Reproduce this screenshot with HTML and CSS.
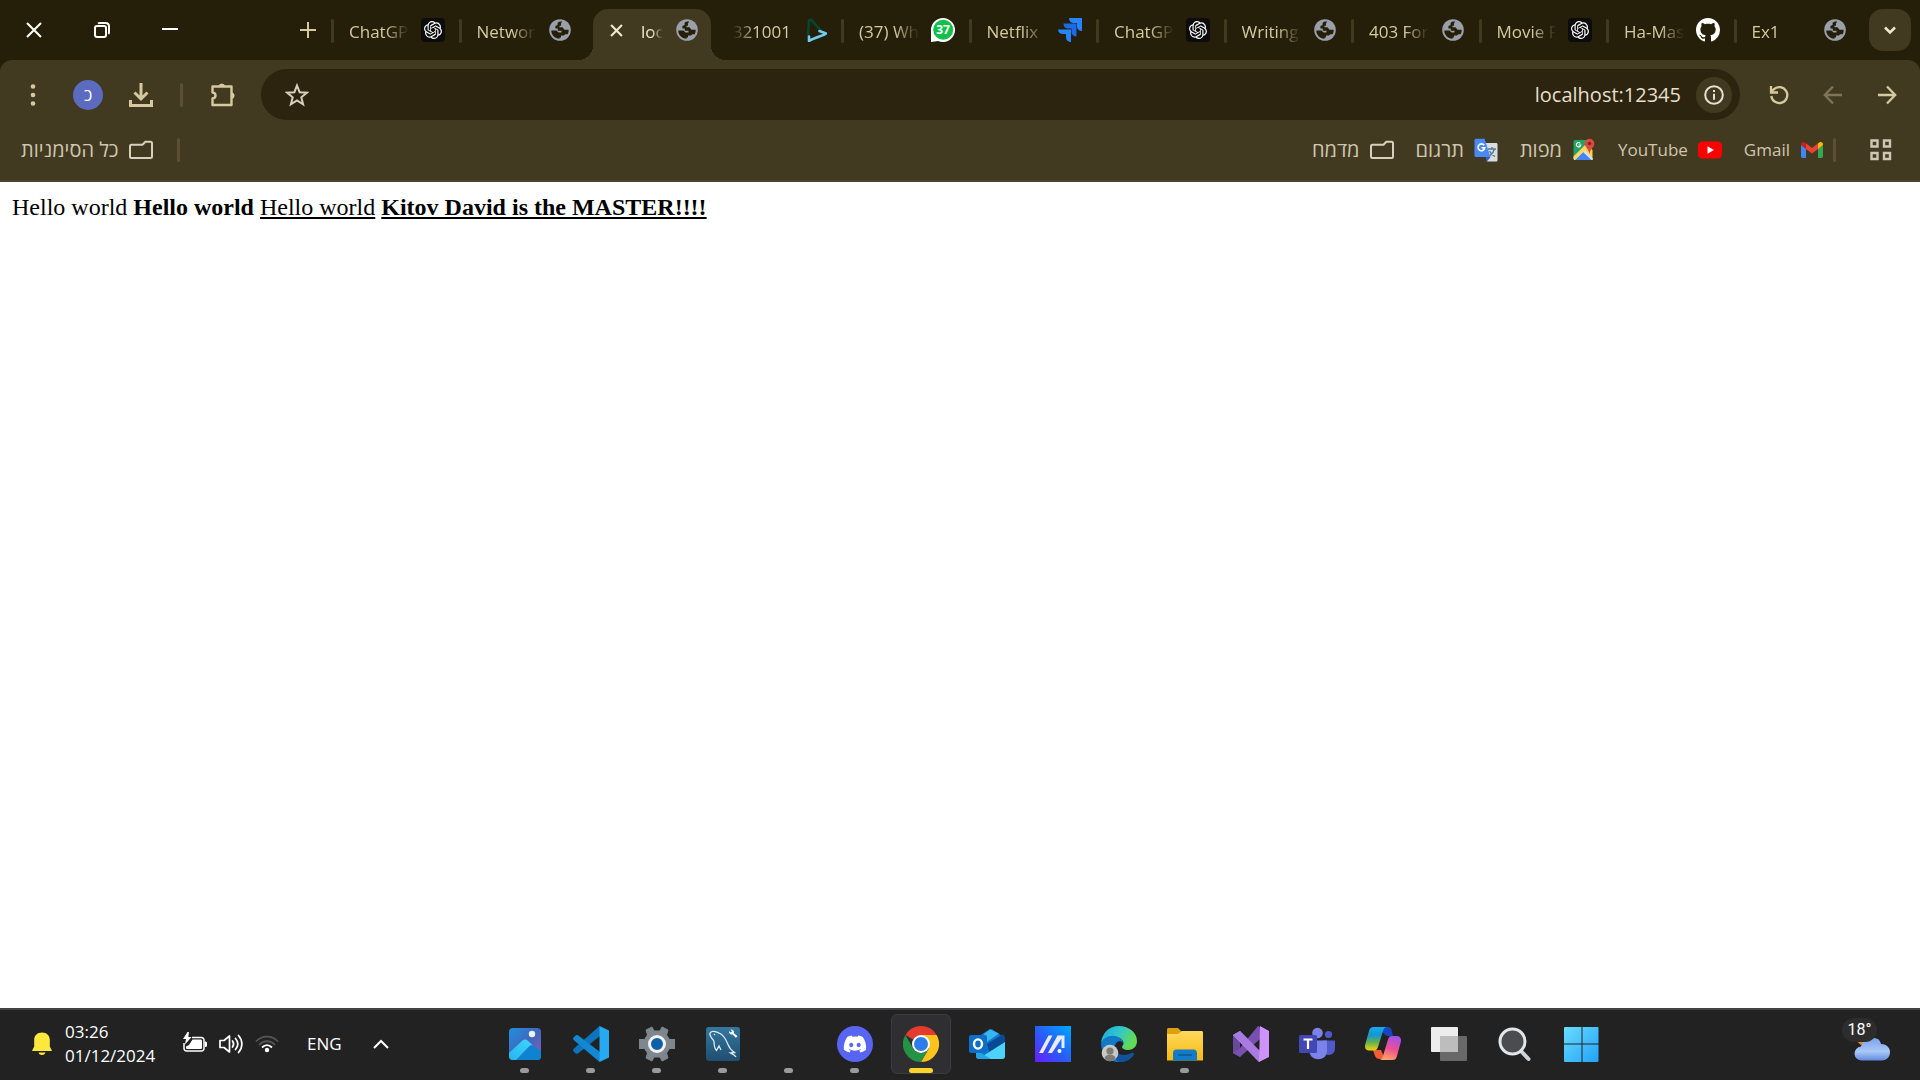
FILE: index.html
```html
<!DOCTYPE html>
<html lang="en">
<head>
<meta charset="utf-8">
<title>localhost:12345</title>
<link rel="stylesheet" href="styles.css">
</head>
<body>
<svg class="defs" aria-hidden="true">
  <defs>
    <symbol id="globe" viewBox="0 0 24 24">
      <circle cx="12" cy="12" r="10.8" fill="#9aa0a9"/>
      <path class="land" d="M3.300 12.600h5.200l2 2h3V12.800H9.800V10.600H7.400V8l2.200-1V4.700c1-.8 2.600-1.300 4.600-1.100L13 5.600v2.200h-1.500v1.400h3l2 2.500h4.100c.2 1.500-.2 3-1 4.500h-2.400l-1.200 1.200h-3v2h-1.500v1.400c-4.600 0-8.200-3.600-8.200-8.200z"/>
    </symbol>
    <symbol id="openai" viewBox="0 0 24 24">
      <rect width="24" height="24" rx="4" fill="#0c0c0c"/>
      <path transform="translate(3 3) scale(.75)" fill="#fff" d="M22.2819 9.8211a5.9847 5.9847 0 0 0-.5157-4.9108 6.0462 6.0462 0 0 0-6.5098-2.9A6.0651 6.0651 0 0 0 4.9807 4.1818a5.9847 5.9847 0 0 0-3.9977 2.9 6.0462 6.0462 0 0 0 .7427 7.0966 5.98 5.98 0 0 0 .511 4.9107 6.051 6.051 0 0 0 6.5146 2.9001A5.9847 5.9847 0 0 0 13.2599 24a6.0557 6.0557 0 0 0 5.7718-4.2058 5.9894 5.9894 0 0 0 3.9977-2.9001 6.0557 6.0557 0 0 0-.7475-7.0729zm-9.022 12.6081a4.4755 4.4755 0 0 1-2.8764-1.0408l.1419-.0804 4.7783-2.7582a.7948.7948 0 0 0 .3927-.6813v-6.7369l2.02 1.1686a.071.071 0 0 1 .038.052v5.5826a4.504 4.504 0 0 1-4.4945 4.4944zm-9.6607-4.1254a4.4708 4.4708 0 0 1-.5346-3.0137l.142.0852 4.783 2.7582a.7712.7712 0 0 0 .7806 0l5.8428-3.3685v2.3324a.0804.0804 0 0 1-.0332.0615L9.74 19.9502a4.4992 4.4992 0 0 1-6.1408-1.6464zM2.3408 7.8956a4.485 4.485 0 0 1 2.3655-1.9728V11.6a.7664.7664 0 0 0 .3879.6765l5.8144 3.3543-2.0201 1.1685a.0757.0757 0 0 1-.071 0l-4.8303-2.7865A4.504 4.504 0 0 1 2.3408 7.872zm16.5963 3.8558L13.1038 8.364 15.1192 7.2a.0757.0757 0 0 1 .071 0l4.8303 2.7913a4.4944 4.4944 0 0 1-.6765 8.1042v-5.6772a.79.79 0 0 0-.407-.667zm2.0107-3.0231l-.142-.0852-4.7735-2.7818a.7759.7759 0 0 0-.7854 0L9.409 9.2297V6.8974a.0662.0662 0 0 1 .0284-.0615l4.8303-2.7866a4.4992 4.4992 0 0 1 6.6802 4.66zM8.3065 12.863l-2.02-1.1638a.0804.0804 0 0 1-.038-.0567V6.0742a4.4992 4.4992 0 0 1 7.3757-3.4537l-.142.0805L8.704 5.459a.7948.7948 0 0 0-.3927.6813zm1.0976-2.3654l2.602-1.4998 2.6069 1.4998v2.9994l-2.5974 1.4997-2.6067-1.4997Z"/>
    </symbol>
    <symbol id="folder" viewBox="0 0 24 24">
      <path d="M2.500 4.800h11l2.800-3h5.200c.8 0 1.500.7 1.500 1.500v13.200c0 .8-.7 1.500-1.500 1.500h-19c-.8 0-1.500-.7-1.500-1.500V6.300c0-.8.7-1.500 1.500-1.500z" transform="translate(0 2)" fill="none" stroke="#d8d0bd" stroke-width="2"/>
    </symbol>
  </defs>
</svg>

<header class="browser">
  <div class="tabstrip">
    <div class="window-controls">
      <button class="win" aria-label="Close"><svg width="16" height="16" viewBox="0 0 16 16"><path d="M1 1l14 14M15 1L1 15" stroke="#fff" stroke-width="2"/></svg></button>
      <button class="win" aria-label="Restore"><svg width="16" height="16" viewBox="0 0 16 16" fill="none" stroke="#fff" stroke-width="2"><rect x="1" y="4" width="11" height="11" rx="2"/><path d="M4 1.500c.5-.4 1-.5 2-.5h5.500C13.500 1 15 2.500 15 4.500V10c0 1-.2 1.600-.6 2"/></svg></button>
      <button class="win" aria-label="Minimize"><svg width="16" height="16" viewBox="0 0 16 16"><path d="M0 7h16" stroke="#fff" stroke-width="2"/></svg></button>
    </div>
    <button class="new-tab" aria-label="New tab"><svg width="16" height="16" viewBox="0 0 16 16"><path d="M8 0v16M0 8h16" stroke="#d6c9a0" stroke-width="2"/></svg></button>
    <nav class="tabs">
      <a class="tab" href="#"><span class="title">ChatGPT</span><svg class="fav"><use href="#openai"/></svg></a>
      <a class="tab" href="#"><span class="title">Network</span><svg class="fav"><use href="#globe"/></svg></a>
      <a class="tab active" href="#" aria-current="page"><svg class="close" viewBox="0 0 12 12"><path d="M1 1l10 10M11 1L1 11" stroke="#eee6d2" stroke-width="2"/></svg><span class="title">loca</span><svg class="fav"><use href="#globe"/></svg></a>
      <a class="tab after-active" href="#"><span class="title start-fade">321001</span><svg class="fav" viewBox="0 0 24 24" fill="none" stroke-width="2.600" stroke-linecap="round" stroke-linejoin="round"><path d="M5 17.500L6 3c.2-1.500 1.500-1.800 2.500-.8L17 11.500" stroke="#06452f"/><path d="M16.500 13l6.500 2.500c-3 2.500-11 3.500-17 7.500V18.500" stroke="#6fcdf2"/></svg></a>
      <a class="tab" href="#"><span class="title">(37) Wh</span><svg class="fav" viewBox="0 0 24 24"><path d="M12 0a12 12 0 1 1-5 22.900L0 24V12A12 12 0 0 1 12 0z" fill="#fff"/><circle cx="12.200" cy="11.800" r="10" fill="#12c04b"/><text x="12" y="16" text-anchor="middle" class="badge">37</text></svg></a>
      <a class="tab" href="#"><span class="title">Netflix</span><svg class="fav" viewBox="0 0 24 24"><path d="M11 0h13v13c-3 0-5-2-5-4.500V5h-3c-3 0-5-2-5-5z" fill="#2684ff"/><path d="M5.500 5.500h13v13c-3 0-5-2-5-4.500v-3.500h-3c-3 0-5-2-5-5z" fill="#1b6be8"/><path d="M0 11.500h13V24c-3 0-5-2-5-4.500V16H5c-3 0-5-2-5-4.500z" fill="#2684ff"/></svg></a>
      <a class="tab" href="#"><span class="title">ChatGPT</span><svg class="fav"><use href="#openai"/></svg></a>
      <a class="tab" href="#"><span class="title">Writing</span><svg class="fav"><use href="#globe"/></svg></a>
      <a class="tab" href="#"><span class="title">403 For</span><svg class="fav"><use href="#globe"/></svg></a>
      <a class="tab" href="#"><span class="title">Movie R</span><svg class="fav"><use href="#openai"/></svg></a>
      <a class="tab" href="#"><span class="title">Ha-Mas</span><svg class="fav" viewBox="0 0 16 16"><path fill="#fff" d="M8 0C3.580 0 0 3.580 0 8c0 3.540 2.290 6.530 5.470 7.590.4.070.55-.17.55-.38 0-.19-.01-.82-.01-1.490-2.010.37-2.530-.49-2.690-.94-.09-.23-.48-.94-.82-1.130-.28-.15-.68-.52-.01-.53.63-.01 1.080.58 1.230.82.72 1.210 1.870.87 2.330.66.07-.52.28-.87.51-1.070-1.780-.2-3.640-.89-3.640-3.950 0-.87.31-1.590.82-2.150-.08-.2-.36-1.020.08-2.120 0 0 .67-.21 2.200.82.64-.18 1.320-.27 2-.27s1.360.09 2 .27c1.530-1.040 2.200-.82 2.200-.82.44 1.100.16 1.920.08 2.120.51.56.82 1.270.82 2.150 0 3.070-1.870 3.750-3.650 3.950.29.25.54.73.54 1.480 0 1.070-.01 1.930-.01 2.200 0 .21.15.46.55.38A8.010 8.010 0 0 0 16 8c0-4.420-3.580-8-8-8z"/></svg></a>
      <a class="tab" href="#"><span class="title">Ex1</span><svg class="fav"><use href="#globe"/></svg></a>
    </nav>
    <button class="tab-search" aria-label="Search tabs"><svg width="14" height="14" viewBox="0 0 14 14"><path d="M2 4.500l5 5 5-5" fill="none" stroke="#eee6d2" stroke-width="2.500"/></svg></button>
  </div>

  <div class="toolbar">
    <div class="tools">
      <button class="tool" aria-label="Menu"><svg width="24" height="24" viewBox="0 0 24 24" fill="#d6c9a0"><circle cx="12" cy="3.500" r="2.300"/><circle cx="12" cy="12" r="2.300"/><circle cx="12" cy="20.500" r="2.300"/></svg></button>
      <button class="avatar" lang="he">כ</button>
      <button class="tool" aria-label="Downloads"><svg width="26" height="26" viewBox="0 0 26 26" fill="none" stroke="#d6c9a0" stroke-width="3"><path d="M13 1v15M6.500 10.500L13 17l6.500-6.500M2.500 18v5.500h21V18"/></svg></button>
      <span class="rule"></span>
      <button class="tool" aria-label="Extensions"><svg width="26" height="26" viewBox="0 0 26 26"><path d="M4.500 4.500h17v18.500h-19v-6.500c4-.5 4-5.500 0-6V4.500z" fill="none" stroke="#d6c9a0" stroke-width="2.400" stroke-linejoin="round"/><path d="M8.500 4a3.400 3.400 0 0 1 6.600 0zM22 10.200a3.400 3.400 0 0 1 0 6.600z" fill="#d6c9a0"/></svg></button>
    </div>
    <div class="omnibox">
      <button class="tool" aria-label="Bookmark this page"><svg width="24" height="24" viewBox="0 0 24 24"><path d="M12 2.500l2.600 6.700 7.200.5-5.500 4.600 1.800 7L12 17.400l-6.100 3.900 1.800-7-5.500-4.600 7.200-.5z" fill="none" stroke="#d8d0bd" stroke-width="2"/></svg></button>
      <input class="url" type="text" aria-label="Address" value="localhost:12345">
      <button class="info" aria-label="Site information"><svg width="20" height="20" viewBox="0 0 20 20"><circle cx="10" cy="10" r="8.800" fill="none" stroke="#e8dfd0" stroke-width="2"/><path d="M10 8.800v6M10 5v2" stroke="#e8dfd0" stroke-width="2"/></svg></button>
    </div>
    <div class="nav-buttons">
      <button class="tool" aria-label="Reload"><svg width="20" height="20" viewBox="0 0 20 20" fill="none" stroke="#d6c9a0" stroke-width="2.300"><path d="M2.300 11a8 8 0 1 0 2.400-6.700L2 7"/><path d="M2 1v6.500h7"/></svg></button>
      <button class="tool" aria-label="Back"><svg width="20" height="20" viewBox="0 0 20 20" fill="none" stroke="#7f7557" stroke-width="2.300"><path d="M19 10H2M10 1.500L1.800 10l8.200 8.500"/></svg></button>
      <button class="tool" aria-label="Forward"><svg width="20" height="20" viewBox="0 0 20 20" fill="none" stroke="#d6c9a0" stroke-width="2.300"><path d="M1 10h17M10 1.500l8.200 8.500-8.200 8.500"/></svg></button>
    </div>
  </div>

  <nav class="bookmarks">
    <a class="bookmark" href="#" lang="he">כל הסימניות<svg class="fav"><use href="#folder"/></svg></a>
    <span class="rule"></span>
    <div class="saved">
      <a class="bookmark" href="#" lang="he">מדמח<svg class="fav"><use href="#folder"/></svg></a>
      <a class="bookmark" href="#" lang="he">תרגום<svg class="fav" viewBox="0 0 24 24"><path d="M10 5h12c1 0 1.500.6 1.500 1.500v15.500c0 1-.6 1.500-1.500 1.500h-9z" fill="#d9dde2"/><path d="M14 11h8M18 9v2M20.500 11c-.7 3-2.500 5-5 7M15.500 13c1 2.300 3 4.300 5.500 5.500" fill="none" stroke="#56798a" stroke-width="1.300"/><path d="M11.500 19h5L13 23.500z" fill="#3a5bbf"/><path d="M2 .8h8.500l6 18.200H2c-.9 0-1.500-.6-1.500-1.500V2.300C.5 1.400 1.100.8 2 .8z" fill="#4a89f3"/><path d="M10.200 7.300A3.400 3.400 0 1 0 10.800 9.700H7.500" fill="none" stroke="#fff" stroke-width="1.600"/></svg></a>
      <a class="bookmark" href="#" lang="he">מפות<svg class="fav" viewBox="0 0 24 24"><path d="M3 2h17v20H3c-1 0-1.500-.6-1.500-1.500v-17C1.500 2.600 2 2 3 2z" fill="#1fa463"/><path d="M1.500 20L15 6.500l5.500 5.500V20L11 12 3 22z" fill="#fbd34a"/><path d="M11.500 10.500l9.500 10c0 1-.5 1.500-1.500 1.500H3z" fill="#dfe3e8"/><path d="M11 14l8.500 8H3z" fill="#4285f4"/><path d="M1.500 18.500L13.500 6.500l2.500 3L3 22c-1 0-1.500-.6-1.500-1.500z" fill="#fdd663"/><path d="M17.500.8a4.800 4.800 0 0 1 4.800 4.800c0 4-3.800 4.800-4.800 10.400-1-5.600-4.800-6.400-4.800-10.400A4.800 4.800 0 0 1 17.500.8z" fill="#dd4b3e"/><circle cx="17.500" cy="5.500" r="1.700" fill="#7d2218"/><path d="M8.300 5.300A2.200 2.200 0 1 0 8.800 7H6.600" fill="none" stroke="#fff" stroke-width="1.200"/></svg></a>
      <a class="bookmark" href="#">YouTube<svg class="fav" viewBox="0 0 24 24"><rect y="3.500" width="24" height="17" rx="4.500" fill="#f00"/><path d="M9.500 8.200v7.600l6.400-3.800z" fill="#fff"/></svg></a>
      <a class="bookmark" href="#">Gmail<svg class="fav" viewBox="0 0 24 24"><path d="M1 7l5 3.800V20H2.700C1.700 20 1 19.300 1 18.300z" fill="#4285f4"/><path d="M18 10.800L23 7v11.300c0 1-.7 1.700-1.700 1.700H18z" fill="#34a853"/><path d="M18 5.500l1.300-1C21 3.300 23 4.500 23 6.400V7l-5 4z" fill="#fbbc04"/><path d="M6 5.500l-1.300-1C3 3.300 1 4.500 1 6.400V7l5 4z" fill="#c5221f"/><path d="M6 5.300l6 4.600 6-4.600V11l-6 4.600L6 11z" fill="#ea4335"/></svg></a>
    </div>
    <span class="rule"></span>
    <button class="apps-grid" aria-label="Apps"><svg width="22" height="22" viewBox="0 0 22 22" fill="none" stroke="#cfc7b6" stroke-width="2.400"><path d="M1.500 1.500h6v6h-6zM14 1.500h6v6h-6zM1.500 14h6v6h-6zM14 14h6v6h-6z"/></svg></button>
  </nav>
</header>

<main class="page">Hello world <b>Hello world</b> <u>Hello world</u> <b><u>Kitov David is the MASTER!!!!</u></b></main>

<footer class="taskbar">
  <div class="tray">
    <svg width="20" height="24" viewBox="0 0 20 24"><path d="M10 .5c5 0 7.800 3.300 7.800 7.500v6.500l2 4v.5H.2v-.5l2-4V8C2.200 3.800 5 .5 10 .5zM6.500 20.500h7c-.5 1.700-1.800 2.500-3.500 2.500s-3-.8-3.500-2.500z" fill="#ffe83d"/></svg>
    <div class="clock"><time>03:26</time><time>01/12/2024</time></div>
    <div class="status">
      <svg width="24" height="24" viewBox="0 0 24 24"><path d="M9 5.500h9.500a2.500 2.500 0 0 1 2.500 2.500v8.500a2.500 2.500 0 0 1-2.500 2.500H3.500a2.500 2.500 0 0 1-2.500-2.500V11" fill="none" stroke="#fff" stroke-width="1.500"/><path d="M9.500 7.500h8c1 0 1.500.5 1.500 1.500v6.500c0 1-.5 1.500-1.500 1.500h-13c-1 0-1.500-.5-1.500-1.500v-1l3-1.500zM22 9.500c1.300 0 2 .5 2 1.500v2.500c0 1-.7 1.500-2 1.500zM4.500 0L0 7h3l-1 5.500L8.500 5H5.300L6 0z" fill="#fff"/></svg>
      <svg width="24" height="24" viewBox="0 0 24 24" fill="none" stroke="#fff" stroke-width="1.700" stroke-linecap="round"><path d="M1 8.500h4L10.500 4v16L5 15.500H1z" stroke-linejoin="round"/><path d="M13.500 9c1.500 2 1.500 4 0 6M16.500 6.500c3 3.500 3 7.500 0 11M19.500 3.500c4.500 5 4.500 12 0 17"/></svg>
      <svg width="24" height="24" viewBox="0 0 24 24" fill="none" stroke="#fff" stroke-width="1.800"><path d="M1 9.500c6-6.500 16-6.500 22 0M4 13c4.500-5 11.500-5 16 0" stroke="#555"/><path d="M7 15.500c3-3 7-3 10 0"/><circle cx="12" cy="18" r="2.200" fill="#fff" stroke="none"/></svg>
    </div>
    <button class="lang">ENG</button>
    <button class="chevron" aria-label="Show hidden icons"><svg width="16" height="10" viewBox="0 0 16 10"><path d="M1 9l7-7 7 7" fill="none" stroke="#fff" stroke-width="2"/></svg></button>
  </div>

  <div class="apps">
    <button class="app running" aria-label="Photos"><svg viewBox="0 0 36 36"><defs><linearGradient id="ph" x1="0" y1="0" x2="1" y2="1"><stop offset="0" stop-color="#1e90e0"/><stop offset=".5" stop-color="#4068bd"/><stop offset="1" stop-color="#9259b5"/></linearGradient><linearGradient id="ph2" x1="0" y1="1" x2="1" y2="0"><stop offset="0" stop-color="#25b6ee"/><stop offset="1" stop-color="#3fd7fb"/></linearGradient></defs><rect x="2" y="2" width="32" height="32" rx="4" fill="url(#ph)"/><path d="M34 25L26 19.500c-1-.7-2-.7-3 0L9 34h21a4 4 0 0 0 4-4z" fill="#0f82d2"/><path d="M2 27L15.500 14.500c1.500-1.300 3.500-1.300 5 0L26 19.500c-1-.7-2-.7-3 0L9 34H6a4 4 0 0 1-4-4z" fill="url(#ph2)"/><circle cx="25" cy="8" r="3.200" fill="#eef1fa"/></svg></button>
    <button class="app running" aria-label="Visual Studio Code"><svg viewBox="0 0 36 36"><path d="M27 0v10L5 27.500c-.8.500-1.700.5-2.400-.1L.7 25.600c-.8-.8-.8-2 0-2.800L26 .5z" fill="#0b74bd"/><path d="M27 36V26L5 9.300c-.8-.6-1.700-.5-2.400.1L.7 11.200c-.8.8-.8 2 0 2.800L26 35.500z" fill="#1288d3"/><path d="M26.500 0L36 4.500v27L26.500 36z" fill="#27a9f2"/></svg></button>
    <button class="app running" aria-label="Settings"><svg viewBox="0 0 36 36"><path d="M13 1l2 4h6l2-4 6 3-1.500 5 3 4.500H36v9h-5.500l-3 4.500L29 32l-6 3-2-4h-6l-2 4-6-3 1.500-5-3-4.500H0v-9h5.500l3-4.500L7 4z" fill="#7e868e" stroke="#7e868e" stroke-linejoin="round"/><circle cx="18" cy="18" r="7.500" fill="#1060a8" stroke="#f2f2f2" stroke-width="3"/></svg></button>
    <button class="app running" aria-label="MySQL Workbench"><svg viewBox="0 0 36 36"><defs><linearGradient id="my" x2="0" y2="1"><stop stop-color="#3477a0"/><stop offset="1" stop-color="#1f4e70"/></linearGradient></defs><rect x="1" y="1" width="34" height="34" rx="3" fill="url(#my)"/><path d="M9 15C5 10 3 7 7 5.500c3-1 5 1 8 2 4 2 6 6 8 11 1.500 4 3.500 6 6.500 8l-4 .5c2 1 4.500 2 5.500 4M9 15c0 4 1 8 2.500 9.500L14 20l2 4" fill="none" stroke="#dce9f1" stroke-width="1.300"/><circle cx="9.500" cy="8.500" r=".8" fill="#dce9f1"/><path d="M25.500 3.500a3 3 0 0 1 3.500 3.700l3.500 3-1.700 1.600-3.200-3.300a3 3 0 0 1-3.600-3.500l1.700 1.500 1.300-1.300z" fill="#fff"/></svg></button>
    <button class="app running" aria-label="Running app"></button>
    <button class="app running" aria-label="Discord"><svg viewBox="0 0 36 36"><circle cx="18" cy="18" r="18" fill="#5865f2"/><path transform="translate(6.800 9.600) scale(.176)" fill="#fff" d="M107.700,8.070A105.150,105.150,0,0,0,81.470,0a72.060,72.060,0,0,0-3.360,6.830A97.680,97.680,0,0,0,49,6.830,72.370,72.370,0,0,0,45.640,0,105.890,105.890,0,0,0,19.390,8.090C2.790,32.650-1.710,56.600.54,80.210h0A105.730,105.730,0,0,0,32.710,96.360,77.700,77.700,0,0,0,39.600,85.250a68.420,68.420,0,0,1-10.850-5.180c.91-.66,1.800-1.340,2.660-2a75.570,75.570,0,0,0,64.320,0c.87.71,1.760,1.390,2.660,2a68.680,68.680,0,0,1-10.870,5.190,77,77,0,0,0,6.890,11.100A105.250,105.250,0,0,0,126.600,80.220h0C129.240,52.840,122.090,29.110,107.700,8.070ZM42.450,65.690C36.180,65.690,31,60,31,53s5-12.740,11.430-12.740S54,46,53.890,53,48.840,65.690,42.450,65.690Zm42.240,0C78.410,65.690,73.250,60,73.250,53s5-12.740,11.440-12.740S96.230,46,96.120,53,91.080,65.690,84.690,65.690Z"/></svg></button>
    <button class="app running current" aria-label="Chrome"><svg viewBox="0 0 36 36"><path d="M18 18L2.400 9A18 18 0 0 1 33.600 9z" fill="#e33b2e"/><path d="M18 9h15.600A18 18 0 0 1 18 36l7.800-13.500z" fill="#fcc31e"/><path d="M2.400 9l7.800 13.500a9 9 0 0 0 15.600 0L18 36A18 18 0 0 1 2.400 9z" fill="#269246"/><circle cx="18" cy="18" r="9" fill="#fff"/><circle cx="18" cy="18" r="7" fill="#2f7de9"/></svg></button>
    <button class="app" aria-label="Outlook"><svg viewBox="0 0 36 36"><path d="M7 12L20 3.500c1.200-.7 2.300-.7 3.500 0L36 12v18a3 3 0 0 1-3 3H10a3 3 0 0 1-3-3z" fill="#1277cf"/><path d="M15 8l6-4.500 9 4-13 9z" fill="#38b6f0"/><path d="M18 18L34 8l2 3v7L20 26z" fill="#0a4a94"/><path d="M14 30l22-14v14a3 3 0 0 1-3 3H12z" fill="#4dd3fb"/><path d="M7 24l15 9H10a3 3 0 0 1-3-3z" fill="#26a5e5"/><rect y="9" width="18" height="18" rx="2" fill="#0f6fc8"/><ellipse cx="9" cy="18" rx="4" ry="4.600" fill="none" stroke="#fff" stroke-width="2.400"/></svg></button>
    <button class="app" aria-label="MyASUS"><svg viewBox="0 0 36 36"><defs><linearGradient id="ma" x1="0" y1="1" x2="1" y2="0"><stop stop-color="#6a1cff"/><stop offset=".5" stop-color="#2461f8"/><stop offset="1" stop-color="#00a8ff"/></linearGradient></defs><path d="M0 0h36v36H0z" fill="url(#ma)"/><path d="M4 27L13.500 9.500h4L8 27zM13 27L22.500 9.500h7V22h-3v-9.500L17 27z" fill="#e9ecff"/><circle cx="24.500" cy="25" r="2" fill="#fff"/></svg></button>
    <button class="app" aria-label="Edge"><svg viewBox="0 0 36 36"><defs><linearGradient id="ed" x2="1" y2=".4"><stop stop-color="#1ba6d8"/><stop offset=".5" stop-color="#30c5cf"/><stop offset="1" stop-color="#63dc55"/></linearGradient></defs><path d="M0 17C1 7 8 0 18 0c10.500 0 18 7 18 15 0 6-4.500 9-9 9-4 0-6-1.500-6-3 0-1 1.500-1.500 1.500-4S20 12 16 11C9 10 3 12 0 17z" fill="url(#ed)"/><path d="M0 17c2-5 8-8 14-7 5 1 8 4 8 7-2-3-8-2-8 4 0 8 8 12 15 9 2-1 3-1.500 4-1.500C30 33 25 36 18 36 8 36 0 28 0 17z" fill="#1279c9"/><path d="M14 19c-1 8 6 12 14 9 3-1 5-2 5 0-3 5-9 8-15 8-6-3-9-12-4-17z" fill="#11529c"/><circle cx="9" cy="27" r="8.300" fill="#cac8c5"/><circle cx="9" cy="25" r="3.600" fill="#7d7a77"/><path d="M3.500 33c0-6 11-6 11 0-3 3-8 3-11 0z" fill="#7d7a77"/></svg></button>
    <button class="app running" aria-label="File Explorer"><svg viewBox="0 0 36 36"><defs><linearGradient id="fo" x2="0" y2="1"><stop stop-color="#ffd95e"/><stop offset="1" stop-color="#f8b90f"/></linearGradient></defs><path d="M0 3.500C0 2.600.6 2 1.500 2H11l4 4v6H0z" fill="#e09f0c"/><path d="M0 8h11l4-3h19.500c.9 0 1.500.6 1.500 1.500v28H0z" fill="url(#fo)"/><path d="M6 34.500V27a3.500 3.500 0 0 1 3.500-3.500h17A3.500 3.500 0 0 1 30 27v7.500z" fill="#117dc8"/><path d="M11 29h14" stroke="#0a5796" stroke-width="1.500"/></svg></button>
    <button class="app" aria-label="Visual Studio"><svg viewBox="0 0 36 36"><path d="M0 9l7-4v26l-7-4z" fill="#68499b"/><path d="M25 0L36 5 7 31l-7-4 7-5z" fill="#7750b0"/><path d="M7 5l20 21-1 10L0 9z" fill="#b286e8"/><path d="M7 5L0 9l26 27 4-8z" fill="#a87be0"/><path d="M27 0l9 5v26l-10 5z" fill="#cd93f8"/></svg></button>
    <button class="app" aria-label="Teams"><svg viewBox="0 0 36 36"><circle cx="18.500" cy="7" r="5.300" fill="#7b83eb"/><circle cx="29.500" cy="8.500" r="3.600" fill="#5059c9"/><path d="M24 14.500h11c.6 0 1 .4 1 1V23a6.500 6.500 0 0 1-12 3z" fill="#5059c9"/><path d="M11 14.500h16c.6 0 1 .4 1 1V25c0 11-17.500 11-17.500 0z" fill="#7b83eb"/><rect y="9" width="18" height="18" rx="1.500" fill="#4148b5"/><path d="M4.500 13.500h9M9 13.500V23" stroke="#fff" stroke-width="2.200"/></svg></button>
    <button class="app" aria-label="Copilot"><svg viewBox="0 0 36 36"><defs><linearGradient id="c1" x2="0" y2="1"><stop stop-color="#19a8ed"/><stop offset=".35" stop-color="#1497cf"/><stop offset=".65" stop-color="#63b050"/><stop offset="1" stop-color="#f4d20d"/></linearGradient><linearGradient id="c2" x1=".6" y1="0" x2=".3" y2="1"><stop stop-color="#a550e8"/><stop offset=".5" stop-color="#ee4f93"/><stop offset="1" stop-color="#ffa763"/></linearGradient></defs><path d="M18 1h5c2 0 3 1 3.500 3l1.500 6h-6L17 6z" fill="#1746c0"/><path d="M8 24h8l4 9h-5c-3 0-4-1-5-3z" fill="#f45b35"/><path d="M8.500 1H22c-2 0-3 1-4 4l-5 16c-.8 2.500-2 3.500-4 3.500H4c-3 0-5-2.500-3.500-7L4 5c1-3 2-4 4.500-4z" fill="url(#c1)"/><path d="M27.500 34H14c2 0 3-1 4-4l5-16.500c.8-2.500 2-3.500 4-3.500h5c3 0 5 2.500 3.500 7L32 30c-1 3-2 4-4.500 4z" fill="url(#c2)"/></svg></button>
    <button class="app" aria-label="Task view"><svg viewBox="0 0 36 36"><rect y="1" width="27" height="25" rx="1" fill="#ededed"/><rect x="9" y="10" width="27" height="25" rx="1" fill="#686868"/><path d="M9 10h18v16H9z" fill="#bdbdbd"/></svg></button>
    <button class="app" aria-label="Search"><svg viewBox="0 0 36 36"><path d="M23 24l8.500 9" stroke="#cfd4d9" stroke-width="4" stroke-linecap="round"/><circle cx="15.500" cy="15.500" r="12.500" fill="#4b4c4f" stroke="#e3e6e8" stroke-width="3"/></svg></button>
    <button class="app" aria-label="Start"><svg viewBox="0 0 36 36"><defs><linearGradient id="wi" x2="1" y2="1"><stop stop-color="#69dcff"/><stop offset="1" stop-color="#21a2f8"/></linearGradient></defs><path d="M1.500 1h17v16.500H1V2zM19.500 1H35l.5.500v16h-16zM1 18.500h17.500V36H1.500L1 35zM19.500 18.500h16V35l-.5 1H19.500z" fill="url(#wi)"/></svg></button>
  </div>

  <button class="weather" aria-label="Weather"><svg width="36" height="30" viewBox="0 0 36 30"><defs><linearGradient id="cl" x2="0" y2="1"><stop stop-color="#7ba3ea"/><stop offset=".6" stop-color="#a9c8f8"/><stop offset="1" stop-color="#628ade"/></linearGradient></defs><path d="M0 8h14l-7 6z" fill="#f0851c"/><path d="M8 29.500a7 7 0 0 1-1-14C9 8 13 7 19 7c5 0 7 2 8 6 5 0 9 3.500 9 8s-3 8.500-8 8.500z" fill="url(#cl)"/></svg><span class="temp">18°</span></button>
</footer>
</body>
</html>
```

FILE: styles.css
```css
* {
  box-sizing: border-box;
}

body {
  margin: 0;
  min-height: 100vh;
  display: flex;
  flex-direction: column;
  background: #fff;
  font-family: "Open Sans", "Noto Sans", "DejaVu Sans", sans-serif;
  font-size: 17px;
  line-height: 24px;
}

button,
input {
  margin: 0;
  padding: 0;
  border: 0;
  background: none;
  color: inherit;
  font: inherit;
}

button {
  display: flex;
  align-items: center;
  justify-content: center;
}

a {
  color: inherit;
  text-decoration: none;
}

svg {
  display: block;
  flex: none;
}

.defs {
  position: absolute;
  width: 0;
  height: 0;
}

.fav {
  width: 24px;
  height: 24px;
}

.land {
  fill: #251f09;
}

.badge {
  font-size: 12px;
  font-weight: 700;
  fill: #fff;
}

.rule {
  width: 3px;
  height: 24px;
  border-radius: 2px;
  background: #5b5033;
}

/* Browser chrome */

.browser {
  background: #251f09;
  color: #d6c9a0;
}

.tabstrip {
  display: flex;
  height: 60px;
}

.window-controls {
  display: flex;
}

.win {
  width: 68px;
}

.new-tab {
  width: 50px;
  margin-left: 79px;
}

.tabs {
  flex: 1;
  display: grid;
  grid-template-columns: repeat(12, minmax(0, 1fr));
  min-width: 0;
}

.tab {
  position: relative;
  display: flex;
  align-items: center;
  gap: 12px;
  padding: 0 16px;
}

.tab::before {
  content: "";
  position: absolute;
  left: -2px;
  top: 19px;
  width: 3px;
  height: 24px;
  border-radius: 2px;
  background: #423a20;
}

.title {
  flex: 1;
  min-width: 0;
  overflow: hidden;
  white-space: nowrap;
  padding-top: 3px;
  mask-image: linear-gradient(to right, #000 60%, transparent);
}

.start-fade {
  direction: rtl;
  mask-image: linear-gradient(to left, #000 60%, transparent);
}

.active {
  margin: 9px 5px 0;
  padding: 0 12px 9px 17px;
  border-radius: 15px 15px 0 0;
  background: #423a20;
  color: #f0e8d4;
}

.active .title {
  padding-left: 6px;
}

.active .land {
  fill: #423a20;
}

.active::before,
.active::after {
  content: "";
  position: absolute;
  left: -15px;
  top: auto;
  bottom: 0;
  width: 15px;
  height: 15px;
  border-radius: 0;
  background: radial-gradient(circle at 0 0, transparent 15px, #423a20 15px);
}

.active::after {
  left: auto;
  right: -15px;
  background: radial-gradient(circle at 100% 0, transparent 15px, #423a20 15px);
}

.after-active::before {
  content: none;
}

.close {
  width: 13px;
  height: 13px;
}

.tab-search {
  width: 42px;
  height: 42px;
  margin: 9px 9px 0 6px;
  border-radius: 14px;
  background: #423a20;
}

.toolbar {
  display: flex;
  align-items: center;
  gap: 12px;
  height: 69px;
  padding: 0 12px;
  border-radius: 12px 12px 0 0;
  background: #423a20;
}

.tools {
  display: flex;
  align-items: center;
  gap: 12px;
}

.tools .rule {
  margin: 0 7px 0 6px;
}

.tool {
  width: 42px;
  height: 42px;
}

.avatar {
  width: 30px;
  height: 30px;
  margin: 0 5px 0 7px;
  border-radius: 50%;
  background: #5c6bc0;
  color: #fff;
}

.omnibox {
  flex: 1;
  display: flex;
  align-items: center;
  height: 51px;
  margin-left: 5px;
  padding: 0 8px 0 15px;
  border-radius: 26px;
  background: #2c240e;
}

.url {
  flex: 1;
  min-width: 0;
  height: 42px;
  margin-right: 15px;
  color: #e6dfcc;
  font-size: 20px;
  text-align: right;
}

.info {
  width: 36px;
  height: 36px;
  border-radius: 50%;
  background: #423a20;
}

.nav-buttons {
  display: flex;
  gap: 12px;
  margin-left: 6px;
}

.bookmarks {
  display: flex;
  align-items: center;
  height: 53px;
  padding: 0 28px 10px 21px;
  border-bottom: 2px solid #4b4632;
  background: #423a20;
  color: #cfc6b0;
}

.bookmark {
  display: flex;
  align-items: center;
  gap: 10px;
}

.bookmark:lang(he) {
  font-size: 20px;
}

.bookmark + .rule {
  margin-left: 24px;
}

.saved {
  display: flex;
  gap: 22px;
  margin-left: auto;
  padding-right: 9px;
}

.apps-grid {
  margin-left: 34px;
}

/* Served document */

.page {
  flex: 1;
  padding: 12px;
  color: #000;
  font-family: "Liberation Serif", serif;
  font-size: 24px;
  line-height: 27px;
}

/* Taskbar */

.taskbar {
  display: flex;
  height: 72px;
  border-top: 2px solid #434343;
  background: #222223;
  color: #fff;
}

.tray {
  flex: 0 0 492px;
  display: flex;
  align-items: center;
  padding: 0 0 2px 32px;
}

.clock {
  display: flex;
  flex-direction: column;
  width: 92px;
  margin-left: 13px;
}

.status {
  display: flex;
  gap: 12px;
  margin-left: 26px;
}

.lang {
  margin-left: 28px;
}

.chevron {
  margin-left: 31px;
}

.apps {
  display: flex;
  gap: 6px;
  padding: 4px 3px;
}

.app {
  position: relative;
  width: 60px;
  height: 60px;
  border: 1px solid transparent;
  border-radius: 6px;
}

.app svg {
  width: 36px;
  height: 36px;
}

.running::after {
  content: "";
  position: absolute;
  left: calc(50% - 5px);
  bottom: 0;
  width: 9px;
  height: 5px;
  border-radius: 3px;
  background: #9a9a9a;
}

.current {
  border-color: #3c3c3e;
  background: #2f2f31;
}

.current::after {
  left: calc(50% - 12px);
  width: 24px;
  background: #fdd42a;
}

.weather {
  position: relative;
  align-items: flex-end;
  width: 60px;
  margin-left: auto;
  margin-right: 18px;
  padding-bottom: 19px;
}

.temp {
  position: absolute;
  left: 0;
  top: 8px;
  width: 35px;
  height: 24px;
  border-radius: 12px;
  background: #2d2d2d;
  font-family: Roboto, sans-serif;
  font-size: 16px;
  text-align: center;
}
```
